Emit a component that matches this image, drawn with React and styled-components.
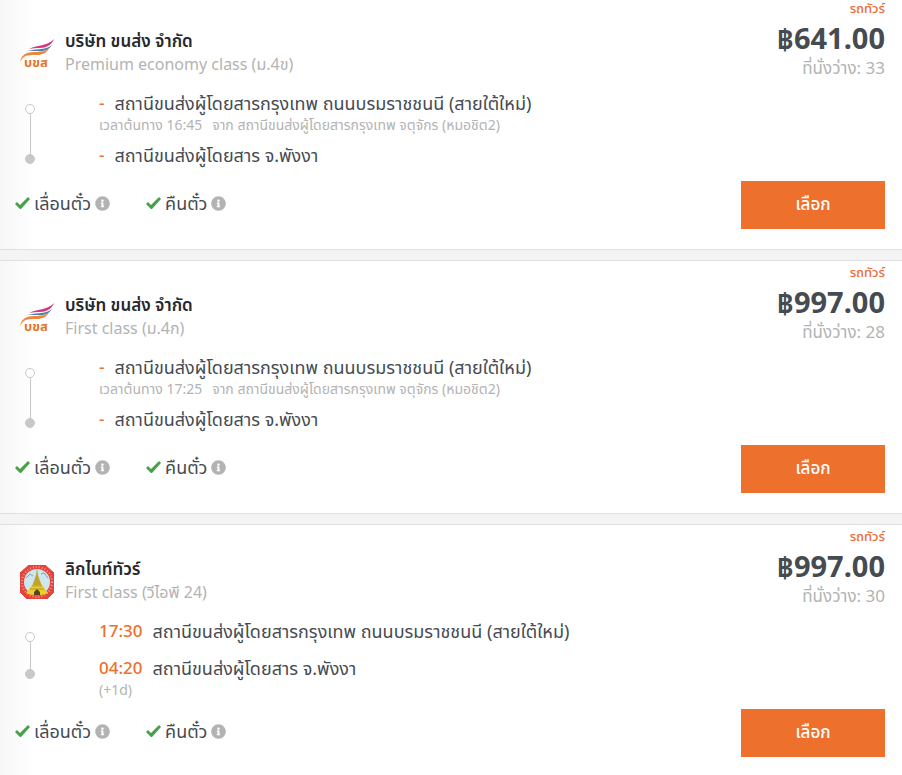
import React from "react";
import styled, { createGlobalStyle } from "styled-components";
import { FaInfoCircle } from "react-icons/fa";

const trips = [
  {
    id: 1,
    logo: "transport",
    company: "บริษัท ขนส่ง จำกัด",
    busClass: "Premium economy class (ม.4ข)",
    from: { time: "-", name: "สถานีขนส่งผู้โดยสารกรุงเทพ ถนนบรมราชชนนี (สายใต้ใหม่)" },
    origin: { time: "16:45", name: "สถานีขนส่งผู้โดยสารกรุงเทพ จตุจักร (หมอชิต2)" },
    to: { time: "-", name: "สถานีขนส่งผู้โดยสาร จ.พังงา" },
    price: "฿641.00",
    seats: 33,
  },
  {
    id: 2,
    logo: "transport",
    company: "บริษัท ขนส่ง จำกัด",
    busClass: "First class (ม.4ก)",
    from: { time: "-", name: "สถานีขนส่งผู้โดยสารกรุงเทพ ถนนบรมราชชนนี (สายใต้ใหม่)" },
    origin: { time: "17:25", name: "สถานีขนส่งผู้โดยสารกรุงเทพ จตุจักร (หมอชิต2)" },
    to: { time: "-", name: "สถานีขนส่งผู้โดยสาร จ.พังงา" },
    price: "฿997.00",
    seats: 28,
  },
  {
    id: 3,
    logo: "lignite",
    company: "ลิกไนท์ทัวร์",
    busClass: "First class (วีไอพี 24)",
    from: { time: "17:30", name: "สถานีขนส่งผู้โดยสารกรุงเทพ ถนนบรมราชชนนี (สายใต้ใหม่)" },
    to: { time: "04:20", name: "สถานีขนส่งผู้โดยสาร จ.พังงา" },
    dayNote: "(+1d)",
    price: "฿997.00",
    seats: 30,
  },
];

function TransportLogo() {
  return (
    <LogoSvg viewBox="0 0 34 34" aria-hidden="true">
      <path d="M0 25C2 15 10 15 17 15C22 15 26 14 29 11C27 16 22 18 17 18C10 18 4 17 0 25Z" fill="#f0853a" />
      <path d="M9 12C16 8 28 9 34 2C32 8 26 11 20 11C16 11 13 11 9 12Z" fill="#d5397c" />
      <path d="M5 15C13 11 26 14 32 8C29 13 23 15 18 14C13 14 9 13 5 15Z" fill="#4e7fae" />
      <LogoText x="16" y="30" textAnchor="middle">บขส</LogoText>
    </LogoSvg>
  );
}

function LigniteLogo() {
  return (
    <LogoSvg viewBox="0 0 34 34" aria-hidden="true">
      <path d="M9 0H25L34 8V27L27 34H7L0 27V8Z" fill="#e5443b" stroke="#e5443b" strokeLinejoin="round" />
      <circle cx="17" cy="17" r="15" fill="none" stroke="#f19a92" strokeWidth="2" strokeDasharray="1 2" />
      <circle cx="17" cy="17" r="13" fill="#cfe6ef" />
      <path d="M6 13L10 9L13 11M21 9L24 8L28 13" fill="none" stroke="#78a3b3" strokeWidth="1" />
      <path d="M17 3L18 10L20 16L22 21H12L14 16L16 10Z" fill="#c3a22a" />
      <path d="M12 20H22L28 28C21 31 13 31 6 28Z" fill="#e9d02f" />
      <path d="M12 21H22M10 24H24" stroke="#b3951f" strokeWidth="1" />
      <path d="M14 30V27L17 24L20 27V30Z" fill="#5d431d" />
    </LogoSvg>
  );
}

function Check() {
  return (
    <CheckSvg viewBox="0 0 15 15" aria-hidden="true">
      <path d="M0 8L2 6L5 9L13 1L15 3L6 13H5Z" fill="currentColor" />
    </CheckSvg>
  );
}

function TripCard({ trip }) {
  return (
    <Card>
      <Detail>
        <Header>
          {trip.logo === "transport" ? <TransportLogo /> : <LigniteLogo />}
          <div>
            <Company>{trip.company}</Company>
            <BusClass>{trip.busClass}</BusClass>
          </div>
        </Header>
        <Route>
          <Track $short={Boolean(trip.dayNote)}>
            <Dot />
            <Line />
            <Dot $filled />
          </Track>
          <Stops $short={Boolean(trip.dayNote)}>
            <li>
              <Stop>
                <Time>{trip.from.time}</Time>
                {trip.from.name}
              </Stop>
              {trip.origin && (
                <Note>
                  <span>เวลาต้นทาง {trip.origin.time}</span>
                  <span>จาก {trip.origin.name}</span>
                </Note>
              )}
            </li>
            <li>
              <Stop>
                <Time>{trip.to.time}</Time>
                {trip.to.name}
              </Stop>
              {trip.dayNote && <Note>{trip.dayNote}</Note>}
            </li>
          </Stops>
        </Route>
        <Policies>
          <Policy>
            <Check />
            เลื่อนตั๋ว
            <InfoIcon />
          </Policy>
          <Policy>
            <Check />
            คืนตั๋ว
            <InfoIcon />
          </Policy>
        </Policies>
      </Detail>
      <Side>
        <BusType>รถทัวร์</BusType>
        <Price>{trip.price}</Price>
        <Seats>ที่นั่งว่าง: {trip.seats}</Seats>
        <SelectButton type="button">เลือก</SelectButton>
      </Side>
    </Card>
  );
}

export default function App() {
  return (
    <>
      <GlobalStyle />
      <List>
        {trips.map((trip) => (
          <TripCard key={trip.id} trip={trip} />
        ))}
      </List>
    </>
  );
}

// Styled Component
const GlobalStyle = createGlobalStyle`
  * {
    box-sizing: border-box;
  }

  body {
    margin: 0;
    background-color: #f4f4f4;
    color: #464b52;
    font-family: "Noto Sans", "Noto Sans Thai", sans-serif;
    font-size: 16px;
    overflow: hidden;
  }
`;

const List = styled.main`
  display: grid;
  gap: 10px;
  margin-top: -4px;
`;

const Card = styled.article`
  display: flex;
  justify-content: space-between;
  min-height: 254px;
  border-top: 1px solid #e0e0e3;
  border-bottom: 1px solid #e0e0e3;
  background: linear-gradient(to right, #f7f7f7, #fff 36px);
`;

const Detail = styled.div`
  display: flex;
  flex-direction: column;
  padding: 32px 0 34px;
`;

const Header = styled.header`
  display: flex;
  gap: 11px;
  padding-left: 20px;
`;

const LogoSvg = styled.svg`
  width: 34px;
  height: 34px;
  margin-top: 8px;
`;

const Company = styled.h2`
  margin: 0;
  color: #26282c;
  font-size: 17px;
  font-weight: 600;
  line-height: 24px;
`;

const BusClass = styled.div`
  color: #b3b3b3;
  font-size: 16px;
  line-height: 22px;
`;

const Route = styled.div`
  display: flex;
  gap: 64px;
  margin-top: 16px;
  padding-left: 25px;
`;

const Track = styled.div`
  display: flex;
  flex-direction: column;
  align-items: center;
  padding: ${(props) => (props.$short ? "13px 0 21px" : "13px 0 3px")};
`;

const Dot = styled.span`
  width: 10px;
  height: 10px;
  border: 1px solid #c8c8c8;
  border-radius: 50%;
  background-color: ${(props) => (props.$filled ? "#c8c8c8" : "#fff")};
`;

const Line = styled.span`
  flex: 1;
  width: 1px;
  background-color: #c8c8c8;
`;

const Stops = styled.ul`
  display: grid;
  gap: ${(props) => (props.$short ? "13px" : "8px")};
  margin: 0;
  padding: 0;
  list-style: none;
`;

const Stop = styled.div`
  display: flex;
  gap: 10px;
  font-size: 18px;
  line-height: 24px;
`;

const Time = styled.span`
  color: #ed702d;
  font-size: 17px;
  font-weight: 500;
`;

const Note = styled.div`
  display: flex;
  gap: 10px;
  color: #b3b3b3;
  font-size: 14px;
  line-height: 20px;
`;

const Policies = styled.div`
  display: flex;
  gap: 36px;
  margin-top: auto;
  padding-left: 15px;
`;

const Policy = styled.span`
  display: flex;
  align-items: center;
  gap: 4px;
  font-size: 18px;
  line-height: 24px;
`;

const CheckSvg = styled.svg`
  width: 15px;
  height: 15px;
  color: #4aa04a;
`;

const InfoIcon = styled(FaInfoCircle)`
  width: 15px;
  height: 15px;
  color: #b3b3b3;
`;

const Side = styled.div`
  display: flex;
  flex-direction: column;
  align-items: flex-end;
  padding: 3px 17px 20px 0;
`;

const BusType = styled.div`
  color: #ed6a3a;
  font-size: 13px;
  font-weight: 500;
  line-height: 16px;
`;

const Price = styled.div`
  margin-top: 2px;
  font-size: 29px;
  font-weight: 700;
  line-height: 40px;
`;

const Seats = styled.div`
  color: #b3b3b3;
  font-size: 17px;
  line-height: 20px;
`;

const SelectButton = styled.button`
  width: 144px;
  height: 48px;
  margin-top: auto;
  border: 0;
  background-color: #ed702d;
  color: #fff;
  font-family: inherit;
  font-size: 17px;
  font-weight: 500;
  cursor: pointer;
`;

const LogoText = styled.text`
  fill: #e9752b;
  font-size: 13px;
  font-weight: 700;
`;
